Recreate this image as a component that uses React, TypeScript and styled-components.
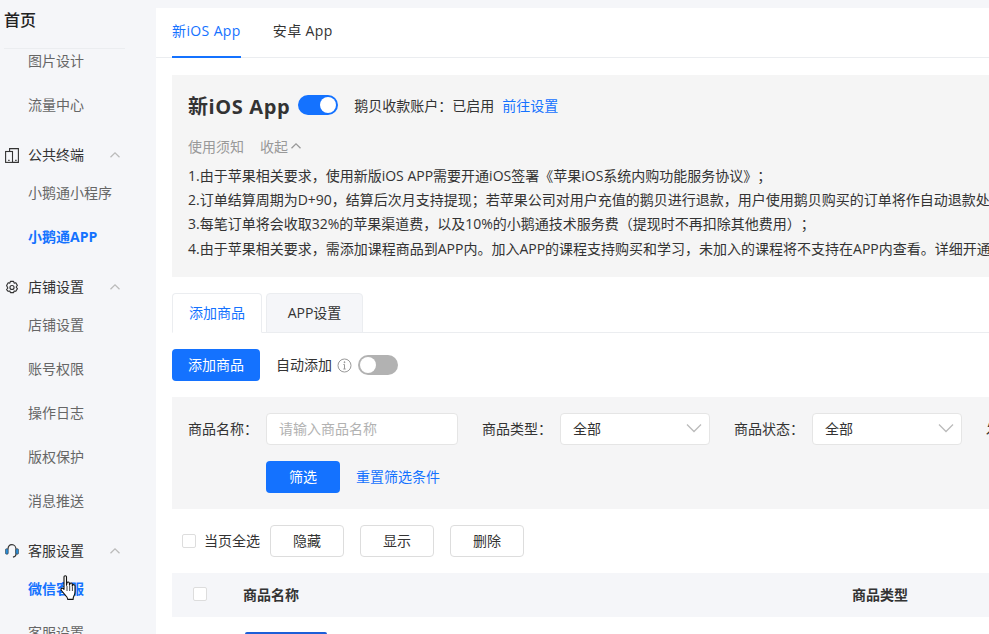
import React from 'react';
import styled, { createGlobalStyle } from 'styled-components';

const GlobalStyle = createGlobalStyle`
  html, body {
    margin: 0;
    height: 100%;
    overflow: hidden;
    background: #f5f6f9;
  }
  * {
    box-sizing: border-box;
  }
  body {
    font-family: "Open Sans", "Noto Sans CJK SC", sans-serif;
    font-size: 14px;
    color: #333;
    text-spacing-trim: space-all;
  }
`;

const Shell = styled.div`
  display: flex;
  width: 989px;
  height: 634px;
  overflow: hidden;
`;

const Sidebar = styled.aside`
  position: relative;
  flex: 0 0 156px;
  display: flex;
  flex-direction: column;
  height: 100%;
`;

const SideTitle = styled.div`
  flex: 0 0 49px;
  margin: 0 31px 0 4px;
  padding-bottom: 10px;
  display: flex;
  align-items: center;
  font-size: 16px;
  font-weight: 500;
  color: #222;
  border-bottom: 1px solid #ebedf0;
`;

const SideScroll = styled.nav`
  flex: 1;
  min-height: 0;
  overflow: hidden;
`;

const SideList = styled.div`
  margin-top: -10px;
`;

const SideItem = styled.div<{ $active?: boolean }>`
  height: 44px;
  padding: 0 0 2px 28px;
  display: flex;
  align-items: center;
  color: ${({ $active }) => ($active ? '#1472ff' : '#666')};
  font-weight: ${({ $active }) => ($active ? 700 : 400)};
`;

const GroupHead = styled.div`
  height: 32px;
  margin-top: 12px;
  padding: 0 34px 0 5px;
  display: flex;
  align-items: center;
  color: #333;
`;

const GroupIcon = styled.span`
  flex: 0 0 14px;
  width: 14px;
  height: 16px;
  margin-right: 9px;
  display: flex;
  align-items: center;
  justify-content: center;
`;

const GroupLabel = styled.span`
  flex: 1;
  padding-bottom: 2px;
`;

const Pointer = styled.svg`
  position: absolute;
  left: 60px;
  top: 575px;
`;

const Main = styled.main`
  flex: 1;
  min-width: 0;
  margin-top: 8px;
  background: #fff;
  overflow: hidden;
`;

const TopTabs = styled.div`
  height: 50px;
  padding-left: 16px;
  display: flex;
  gap: 32px;
  border-bottom: 1px solid #ebedf0;
`;

const TopTab = styled.div<{ $active?: boolean }>`
  height: 50px;
  display: flex;
  align-items: center;
  padding-bottom: 4px;
  letter-spacing: 0.38px;
  color: ${({ $active }) => ($active ? '#1472ff' : '#333')};
  border-bottom: 2px solid ${({ $active }) => ($active ? '#1472ff' : 'transparent')};
`;

const Body = styled.div`
  padding-left: 16px;
`;

const Notice = styled.section`
  margin-top: 17px;
  height: 202px;
  padding: 16px 0 0 16px;
  background: #f5f5f5;
  white-space: nowrap;
  overflow: hidden;
`;

const NoticeHead = styled.div`
  height: 30px;
  padding-bottom: 2px;
  display: flex;
  align-items: center;
`;

const NoticeTitle = styled.h2`
  margin: 0 8px 0 0;
  font-size: 20px;
  font-weight: 700;
  letter-spacing: 0.6px;
  color: #333;
`;

const Toggle = styled.span<{ $on?: boolean }>`
  position: relative;
  flex: 0 0 40px;
  width: 40px;
  height: 20px;
  border-radius: 10px;
  background: ${({ $on }) => ($on ? '#1472ff' : '#b2b2b2')};

  &::after {
    content: '';
    position: absolute;
    top: 2px;
    left: ${({ $on }) => ($on ? '22px' : '2px')};
    width: 16px;
    height: 16px;
    border-radius: 50%;
    background: #fff;
  }
`;

const AccountText = styled.span`
  margin-left: 16px;
`;

const LinkText = styled.a`
  color: #1472ff;
  margin-left: 8px;
`;

const NoticeToggleRow = styled.div`
  margin-top: 15px;
  height: 20px;
  display: flex;
  align-items: center;
  gap: 16px;
  color: #999;
`;

const Collapse = styled.span`
  display: inline-flex;
  align-items: center;
  gap: 2px;
`;

const NoticeLines = styled.div`
  margin-top: 8px;
  line-height: 24.2px;
  color: #333;
`;

const SubTabs = styled.div`
  margin-top: 16px;
  height: 40px;
  display: flex;
  gap: 4px;
  border-bottom: 1px solid #ebedf0;
`;

const SubTab = styled.div<{ $active?: boolean }>`
  width: ${({ $active }) => ($active ? '90px' : '97px')};
  height: 40px;
  padding-bottom: 2px;
  display: flex;
  align-items: center;
  justify-content: center;
  border: 1px solid #ebedf0;
  border-bottom: ${({ $active }) => ($active ? '1px solid #fff' : '1px solid #ebedf0')};
  border-radius: 4px 4px 0 0;
  background: ${({ $active }) => ($active ? '#fff' : '#f5f6f9')};
  color: ${({ $active }) => ($active ? '#1472ff' : '#333')};
`;

const ActionRow = styled.div`
  margin-top: 16px;
  height: 32px;
  display: flex;
  align-items: center;
`;

const PrimaryButton = styled.button<{ $width: number }>`
  width: ${({ $width }) => $width}px;
  height: 32px;
  padding: 0 0 2px;
  border: none;
  border-radius: 4px;
  background: #1472ff;
  color: #fff;
  font: inherit;
`;

const AutoLabel = styled.span`
  margin-left: 16px;
  padding-bottom: 2px;
`;

const InfoIcon = styled.svg`
  margin: 0 6px 0 5px;
`;

const FilterPanel = styled.section`
  margin-top: 16px;
  height: 112px;
  padding: 16px 0 0 16px;
  background: #f5f5f6;
  overflow: hidden;
`;

const FilterRow = styled.div`
  display: flex;
  align-items: center;
  white-space: nowrap;
`;

const FilterLabel = styled.label`
  flex: 0 0 auto;
  width: 78px;
  padding-bottom: 2px;
`;

const FilterSpacer = styled.span`
  flex: 0 0 24px;
`;

const TextField = styled.div`
  flex: 0 0 192px;
  height: 32px;
  padding: 0 0 2px 12px;
  display: flex;
  align-items: center;
  background: #fff;
  border: 1px solid #e5e5e5;
  border-radius: 4px;
  color: #b2b2b2;
`;

const SelectField = styled.div`
  flex: 0 0 150px;
  height: 32px;
  padding: 0 7px 2px 12px;
  display: flex;
  align-items: center;
  justify-content: space-between;
  background: #fff;
  border: 1px solid #e5e5e5;
  border-radius: 4px;
  color: #333;
`;

const FilterActions = styled.div`
  margin: 16px 0 0 78px;
  display: flex;
  align-items: center;
  gap: 16px;
`;

const PlainLink = styled.a`
  color: #1472ff;
  padding-bottom: 2px;
`;

const BatchRow = styled.div`
  margin-top: 16px;
  height: 32px;
  padding-left: 10px;
  display: flex;
  align-items: center;
`;

const CheckBox = styled.span`
  flex: 0 0 14px;
  width: 14px;
  height: 14px;
  background: #fff;
  border: 1px solid #ddd;
  border-radius: 2px;
`;

const BatchLabel = styled.span`
  margin: 0 10px 0 8px;
  padding-bottom: 2px;
`;

const GhostButton = styled.button`
  width: 74px;
  height: 32px;
  margin-right: 16px;
  padding: 0 0 2px;
  background: #fff;
  border: 1px solid #ddd;
  border-radius: 4px;
  color: #333;
  font: inherit;
`;

const TableHead = styled.div`
  margin-top: 16px;
  height: 44px;
  padding: 0 0 2px 21px;
  display: flex;
  align-items: center;
  background: #f5f6f9;
  font-weight: 700;
`;

const HeadName = styled.span`
  margin-left: 36px;
  width: 609px;
`;

const TableRow = styled.div`
  padding: 15px 0 0 73px;
`;

const Thumb = styled.div`
  width: 82px;
  height: 40px;
  background: #1c5fd8;
  border-radius: 2px;
`;

const Chevron = () => (
  <svg width="14" height="14" viewBox="0 0 14 14" fill="none" stroke="#bbb" strokeWidth="1.3">
    <path d="M2.5 9.2 7 4.8l4.5 4.4" />
  </svg>
);

const SmallUp = () => (
  <svg width="12" height="12" viewBox="0 0 12 12" fill="none" stroke="#999" strokeWidth="1.3">
    <path d="M1.5 8.2 6 3.8l4.5 4.4" />
  </svg>
);

const SelectArrow = () => (
  <svg width="16" height="10" viewBox="0 0 16 10" fill="none" stroke="#bbb" strokeWidth="1.3">
    <path d="M1 1.5 8 8.5l7-7" />
  </svg>
);

const DeviceIcon = () => (
  <svg width="14" height="15" viewBox="0 0 14 15" fill="none" stroke="#333" strokeWidth="1.1">
    <path d="M4.600 3.500V.6h8.800v13.800H7.500" />
    <rect x="0.600" y="3.500" width="6.900" height="10.900" />
    <path d="M3.200 12.400h1.400M10.200 12.400h1.400" />
  </svg>
);

const GearIcon = () => (
  <svg width="15" height="15" viewBox="0 0 15 15" fill="none" stroke="#333" strokeWidth="1.2" strokeLinejoin="round">
    <path d="M5.800 1h3.400l.6 1.800 1.800-.4 1.700 2.900-1.200 1.400 0 .6 1.200 1.400-1.700 2.900-1.800-.4-.6 1.800H5.800l-.6-1.800-1.800.4L1.700 9.700l1.200-1.400 0-.6L1.700 5.300l1.700-2.900 1.800.4Z" />
    <circle cx="7.500" cy="7.500" r="2.200" />
  </svg>
);

const HeadsetIcon = () => (
  <svg width="15" height="16" viewBox="0 0 15 16" fill="none">
    <path d="M3.200 6.500C3.200 3.400 5 1.200 7.500 1.200s4.300 2.200 4.300 5.300v4.800c0 1.800-1.300 3-3.300 3.300" stroke="#333" strokeWidth="1.2" />
    <rect x="0.500" y="5.500" width="3" height="6" rx="1.300" fill="#2a8cd6" stroke="#333" strokeWidth="0.600" />
    <rect x="11.500" y="5.500" width="3" height="6" rx="1.300" fill="#2a8cd6" stroke="#333" strokeWidth="0.600" />
  </svg>
);

const HandCursor = () => (
  <Pointer width="20" height="28" viewBox="0 0 20 28">
    <path
      d="M4 1.800c0-1.400 2.500-1.400 2.500 0v8.500l.5-2.500c.3-1.200 2.300-1 2.400.4l.1 2 .5-1.500c.4-1.100 2.200-.8 2.300.5v1.800l.5-.9c.6-.9 2.200-.5 2.200.8v5.500c0 2-.4 3.300-1.100 4.700-.5 1.100-.8 2.100-.8 3.300H7.800c0-1.400-.9-2.500-2.100-3.700L1.400 15.500c-1.200-1.500.5-3 1.900-1.900L4 14.300V1.800Z"
      fill="#fff"
      stroke="#111"
      strokeWidth="1.100"
      strokeLinejoin="round"
    />
    <path d="M7 11v5M9.700 11v5M12.400 11.500v4.500" stroke="#111" strokeWidth="0.800" />
  </Pointer>
);

const noticeLines = [
  '1.由于苹果相关要求，使用新版iOS APP需要开通iOS签署《苹果iOS系统内购功能服务协议》；',
  '2.订单结算周期为D+90，结算后次月支持提现；若苹果公司对用户充值的鹅贝进行退款，用户使用鹅贝购买的订单将作自动退款处理；',
  '3.每笔订单将会收取32%的苹果渠道费，以及10%的小鹅通技术服务费（提现时不再扣除其他费用）；',
  '4.由于苹果相关要求，需添加课程商品到APP内。加入APP的课程支持购买和学习，未加入的课程将不支持在APP内查看。详细开通流程请查看文档',
];

export default function App() {
  return (
    <>
      <GlobalStyle />
      <Shell>
        <Sidebar>
          <SideTitle>首页</SideTitle>
          <SideScroll>
            <SideList>
              <SideItem>图片设计</SideItem>
              <SideItem>流量中心</SideItem>
              <GroupHead>
                <GroupIcon><DeviceIcon /></GroupIcon>
                <GroupLabel>公共终端</GroupLabel>
                <Chevron />
              </GroupHead>
              <SideItem>小鹅通小程序</SideItem>
              <SideItem $active>小鹅通APP</SideItem>
              <GroupHead>
                <GroupIcon><GearIcon /></GroupIcon>
                <GroupLabel>店铺设置</GroupLabel>
                <Chevron />
              </GroupHead>
              <SideItem>店铺设置</SideItem>
              <SideItem>账号权限</SideItem>
              <SideItem>操作日志</SideItem>
              <SideItem>版权保护</SideItem>
              <SideItem>消息推送</SideItem>
              <GroupHead>
                <GroupIcon><HeadsetIcon /></GroupIcon>
                <GroupLabel>客服设置</GroupLabel>
                <Chevron />
              </GroupHead>
              <SideItem $active>微信客服</SideItem>
              <SideItem>客服设置</SideItem>
            </SideList>
          </SideScroll>
          <HandCursor />
        </Sidebar>
        <Main>
          <TopTabs>
            <TopTab $active>新iOS App</TopTab>
            <TopTab>安卓 App</TopTab>
          </TopTabs>
          <Body>
            <Notice>
              <NoticeHead>
                <NoticeTitle>新iOS App</NoticeTitle>
                <Toggle $on />
                <AccountText>鹅贝收款账户：已启用</AccountText>
                <LinkText>前往设置</LinkText>
              </NoticeHead>
              <NoticeToggleRow>
                <span>使用须知</span>
                <Collapse>收起<SmallUp /></Collapse>
              </NoticeToggleRow>
              <NoticeLines>
                {noticeLines.map((line) => (
                  <div key={line}>{line}</div>
                ))}
              </NoticeLines>
            </Notice>
            <SubTabs>
              <SubTab $active>添加商品</SubTab>
              <SubTab>APP设置</SubTab>
            </SubTabs>
            <ActionRow>
              <PrimaryButton $width={88}>添加商品</PrimaryButton>
              <AutoLabel>自动添加</AutoLabel>
              <InfoIcon width="15" height="15" viewBox="0 0 15 15" fill="none" stroke="#999">
                <circle cx="7.500" cy="7.500" r="6.500" />
                <path d="M7.500 6.500v4.500M6.300 11h2.400M6.400 6.500h1.100" />
                <circle cx="7.500" cy="4.200" r="0.500" fill="#999" />
              </InfoIcon>
              <Toggle />
            </ActionRow>
            <FilterPanel>
              <FilterRow>
                <FilterLabel>商品名称：</FilterLabel>
                <TextField>请输入商品名称</TextField>
                <FilterSpacer />
                <FilterLabel>商品类型：</FilterLabel>
                <SelectField>全部<SelectArrow /></SelectField>
                <FilterSpacer />
                <FilterLabel>商品状态：</FilterLabel>
                <SelectField>全部<SelectArrow /></SelectField>
                <FilterSpacer />
                <FilterLabel>发布时间：</FilterLabel>
              </FilterRow>
              <FilterActions>
                <PrimaryButton $width={74}>筛选</PrimaryButton>
                <PlainLink>重置筛选条件</PlainLink>
              </FilterActions>
            </FilterPanel>
            <BatchRow>
              <CheckBox />
              <BatchLabel>当页全选</BatchLabel>
              <GhostButton>隐藏</GhostButton>
              <GhostButton>显示</GhostButton>
              <GhostButton>删除</GhostButton>
            </BatchRow>
            <TableHead>
              <CheckBox />
              <HeadName>商品名称</HeadName>
              <span>商品类型</span>
            </TableHead>
            <TableRow>
              <Thumb />
            </TableRow>
          </Body>
        </Main>
      </Shell>
    </>
  );
}
